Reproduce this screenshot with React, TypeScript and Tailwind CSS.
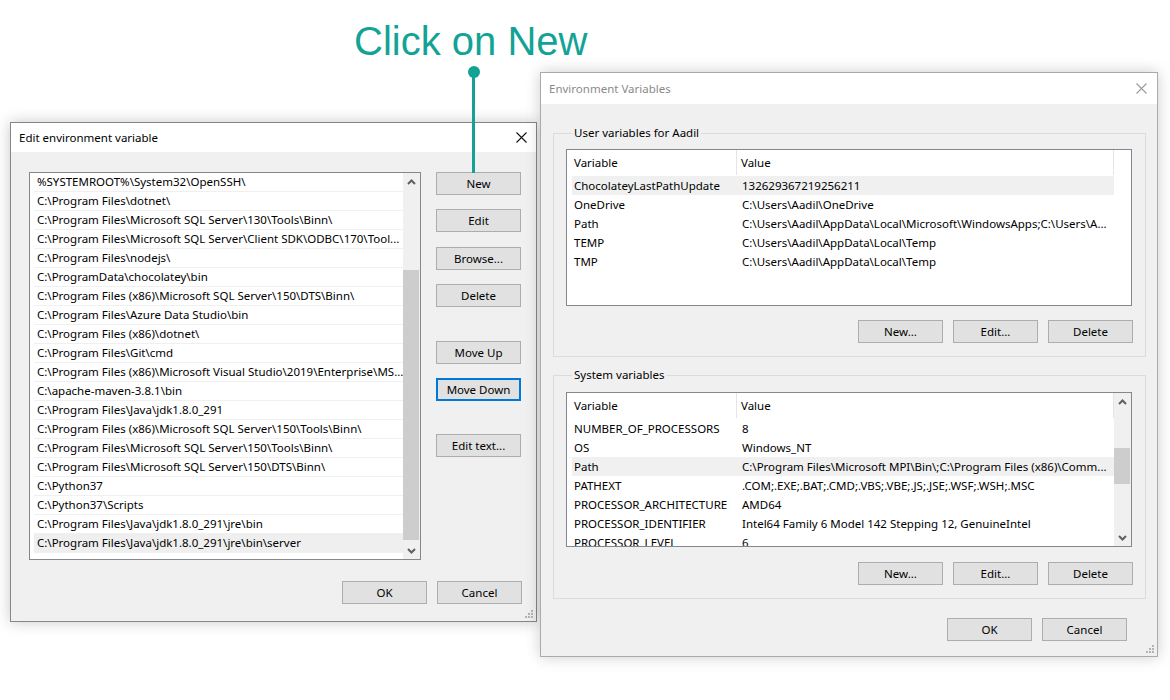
import clsx from "clsx";

const UI_FONT = "font-['Segoe_UI','Noto_Sans',sans-serif]";

const editPaths = [
  "%SYSTEMROOT%\\System32\\OpenSSH\\",
  "C:\\Program Files\\dotnet\\",
  "C:\\Program Files\\Microsoft SQL Server\\130\\Tools\\Binn\\",
  "C:\\Program Files\\Microsoft SQL Server\\Client SDK\\ODBC\\170\\Tool...",
  "C:\\Program Files\\nodejs\\",
  "C:\\ProgramData\\chocolatey\\bin",
  "C:\\Program Files (x86)\\Microsoft SQL Server\\150\\DTS\\Binn\\",
  "C:\\Program Files\\Azure Data Studio\\bin",
  "C:\\Program Files (x86)\\dotnet\\",
  "C:\\Program Files\\Git\\cmd",
  "C:\\Program Files (x86)\\Microsoft Visual Studio\\2019\\Enterprise\\MS...",
  "C:\\apache-maven-3.8.1\\bin",
  "C:\\Program Files\\Java\\jdk1.8.0_291",
  "C:\\Program Files (x86)\\Microsoft SQL Server\\150\\Tools\\Binn\\",
  "C:\\Program Files\\Microsoft SQL Server\\150\\Tools\\Binn\\",
  "C:\\Program Files\\Microsoft SQL Server\\150\\DTS\\Binn\\",
  "C:\\Python37",
  "C:\\Python37\\Scripts",
  "C:\\Program Files\\Java\\jdk1.8.0_291\\jre\\bin",
  "C:\\Program Files\\Java\\jdk1.8.0_291\\jre\\bin\\server",
];

const userVars: [string, string][] = [
  ["ChocolateyLastPathUpdate", "132629367219256211"],
  ["OneDrive", "C:\\Users\\Aadil\\OneDrive"],
  ["Path", "C:\\Users\\Aadil\\AppData\\Local\\Microsoft\\WindowsApps;C:\\Users\\A..."],
  ["TEMP", "C:\\Users\\Aadil\\AppData\\Local\\Temp"],
  ["TMP", "C:\\Users\\Aadil\\AppData\\Local\\Temp"],
];

const systemVars: [string, string][] = [
  ["NUMBER_OF_PROCESSORS", "8"],
  ["OS", "Windows_NT"],
  ["Path", "C:\\Program Files\\Microsoft MPI\\Bin\\;C:\\Program Files (x86)\\Comm..."],
  ["PATHEXT", ".COM;.EXE;.BAT;.CMD;.VBS;.VBE;.JS;.JSE;.WSF;.WSH;.MSC"],
  ["PROCESSOR_ARCHITECTURE", "AMD64"],
  ["PROCESSOR_IDENTIFIER", "Intel64 Family 6 Model 142 Stepping 12, GenuineIntel"],
  ["PROCESSOR_LEVEL", "6"],
];

function CloseIcon({ color }: { color: string }) {
  return (
    <svg width="11" height="11" viewBox="0 0 11 11">
      <path d="M0.5 0.5 L10.5 10.5 M10.5 0.5 L0.5 10.5" stroke={color} strokeWidth="1.1" />
    </svg>
  );
}

function Chevron({ up }: { up?: boolean }) {
  return (
    <svg width="9" height="6" viewBox="0 0 9 6">
      <path d={up ? "M1 5 L4.5 1.5 L8 5" : "M1 1 L4.5 4.5 L8 1"} stroke="#606060" strokeWidth="2" fill="none" />
    </svg>
  );
}

function Grip() {
  return (
    <svg width="8" height="8" viewBox="0 0 8 8" className="absolute right-[3px] bottom-[3px]">
      <g fill="#b4b4b4">
        <rect x="6" y="0" width="2" height="2" />
        <rect x="3" y="3" width="2" height="2" />
        <rect x="6" y="3" width="2" height="2" />
        <rect x="0" y="6" width="2" height="2" />
        <rect x="3" y="6" width="2" height="2" />
        <rect x="6" y="6" width="2" height="2" />
      </g>
    </svg>
  );
}

function Btn({ children, focus, className }: { children: string; focus?: boolean; className?: string }) {
  return (
    <div
      className={clsx(
        "w-[85px] h-[23px] shrink-0 flex items-center justify-center bg-[#e1e1e1] text-[11.5px] text-black",
        focus ? "border-2 border-[#0078d7]" : "border border-[#adadad]",
        className
      )}
    >
      {children}
    </div>
  );
}

function Scrollbar({ thumbTop, thumbHeight }: { thumbTop: number; thumbHeight: number }) {
  return (
    <div className="w-[17px] shrink-0 self-stretch bg-[#f0f0f0] flex flex-col">
      <div className="h-[17px] flex items-center justify-center">
        <Chevron up />
      </div>
      <div className="flex-1 relative">
        <div className="absolute left-0 right-[1px] bg-[#cdcdcd]" style={{ top: thumbTop, height: thumbHeight }} />
      </div>
      <div className="h-[17px] flex items-center justify-center">
        <Chevron />
      </div>
    </div>
  );
}

function EditDialog() {
  return (
    <div className={clsx("absolute left-[10px] top-[122px] w-[527px] h-[500px] border border-[#868686] bg-[#f0f0f0] flex flex-col shadow-[0_0_14px_rgba(0,0,0,0.22)]", UI_FONT)}>
      <div className="h-[29px] bg-white flex items-center justify-between pl-[8px] pr-[9px] text-[11.5px] text-black">
        <span>Edit environment variable</span>
        <CloseIcon color="#111" />
      </div>
      <div className="flex pl-[18px] pt-[20px]">
        <div className="w-[392px] h-[388px] shrink-0 border border-[#828790] bg-white flex">
          <div className="flex-1 min-w-0 flex flex-col pl-[4px]">
            {editPaths.map((p, i) => (
              <div
                key={p}
                className={clsx(
                  "h-[19px] shrink-0 flex items-center pl-[3px] text-[11.5px] text-black whitespace-nowrap overflow-hidden border-b border-[#f0f0f0]",
                  i === editPaths.length - 1 && "bg-[#efefef]"
                )}
              >
                {p}
              </div>
            ))}
          </div>
          <Scrollbar thumbTop={80} thumbHeight={270} />
        </div>
        <div className="ml-[15px] flex flex-col">
          <Btn>New</Btn>
          <Btn className="mt-[14px]">Edit</Btn>
          <Btn className="mt-[15px]">Browse...</Btn>
          <Btn className="mt-[14px]">Delete</Btn>
          <Btn className="mt-[34px]">Move Up</Btn>
          <Btn focus className="mt-[14px]">Move Down</Btn>
          <Btn className="mt-[33px]">Edit text...</Btn>
        </div>
      </div>
      <div className="flex justify-end gap-[10px] pr-[14px] mt-[21px]">
        <Btn>OK</Btn>
        <Btn>Cancel</Btn>
      </div>
      <Grip />
    </div>
  );
}

function VarList({
  rows,
  selected,
  height,
  scroll,
}: {
  rows: [string, string][];
  selected: number;
  height: number;
  scroll?: boolean;
}) {
  return (
    <div className="w-[566px] border border-[#828790] bg-white flex overflow-hidden" style={{ height }}>
      <div className="w-[547px] shrink-0 flex flex-col overflow-hidden">
        <div className="h-[25px] flex shrink-0 text-[11.5px] text-black">
          <div className="w-[170px] pl-[7px] flex items-center border-r border-[#e5e5e5]">Variable</div>
          <div className="flex-1 pl-[4px] flex items-center border-r border-[#e5e5e5]">Value</div>
        </div>
        <div className="pl-[5px] pt-[1px] flex flex-col">
          {rows.map(([k, v], i) => (
            <div
              key={k}
              className={clsx("h-[19px] shrink-0 flex items-center text-[11.5px] text-black whitespace-nowrap", i === selected && "bg-[#f0f0f0]")}
            >
              <div className="w-[165px] shrink-0 pl-[2px] overflow-hidden">{k}</div>
              <div className="flex-1 min-w-0 pl-[5px] overflow-hidden">{v}</div>
            </div>
          ))}
        </div>
      </div>
      {scroll ? <Scrollbar thumbTop={38} thumbHeight={36} /> : <div className="flex-1" />}
    </div>
  );
}

function Group({ label, children }: { label: string; children: React.ReactNode }) {
  return (
    <fieldset className="border border-[#dcdcdc] pl-[12px] pr-[12px] pb-[13px]">
      <legend className="ml-[6px] px-[2px] text-[11.5px] leading-[16px] text-black">{label}</legend>
      {children}
    </fieldset>
  );
}

function EnvDialog() {
  return (
    <div className={clsx("absolute left-[540px] top-[72px] w-[618px] h-[585px] border border-[#aaaaaa] bg-[#f0f0f0] flex flex-col shadow-[0_0_14px_rgba(0,0,0,0.2)]", UI_FONT)}>
      <div className="h-[31px] bg-white flex items-center justify-between pl-[8px] pr-[10px] text-[11.5px] text-[#8a8a8a]">
        <span>Environment Variables</span>
        <CloseIcon color="#9a9a9a" />
      </div>
      <div className="flex flex-col pl-[12px] pr-[11px] pt-[21px]">
        <Group label="User variables for Aadil">
          <div className="mt-[8px]">
            <VarList rows={userVars} selected={0} height={157} />
          </div>
          <div className="flex justify-end gap-[10px] mt-[14px]">
            <Btn>New...</Btn>
            <Btn>Edit...</Btn>
            <Btn>Delete</Btn>
          </div>
        </Group>
        <div className="h-[10px]" />
        <Group label="System variables">
          <div className="mt-[9px]">
            <VarList rows={systemVars} selected={2} height={155} scroll />
          </div>
          <div className="flex justify-end gap-[10px] mt-[15px]">
            <Btn>New...</Btn>
            <Btn>Edit...</Btn>
            <Btn>Delete</Btn>
          </div>
        </Group>
      </div>
      <div className="flex justify-end gap-[10px] pr-[30px] mt-[19px]">
        <Btn>OK</Btn>
        <Btn>Cancel</Btn>
      </div>
      <Grip />
    </div>
  );
}

export default function App() {
  return (
    <div className="relative w-[1170px] h-[700px] bg-white overflow-hidden">
      <div className="absolute left-[354px] top-[21px] text-[40px] leading-[40px] text-[#12a396] font-['Liberation_Sans',Arial,sans-serif]">
        Click on New
      </div>
      <EditDialog />
      <EnvDialog />
      <div className="absolute left-[468px] top-[66px] w-[12px] h-[12px] rounded-full bg-[#12a396]" />
      <div className="absolute left-[472px] top-[72px] w-[3px] h-[101px] bg-[#12a396]" />
    </div>
  );
}
